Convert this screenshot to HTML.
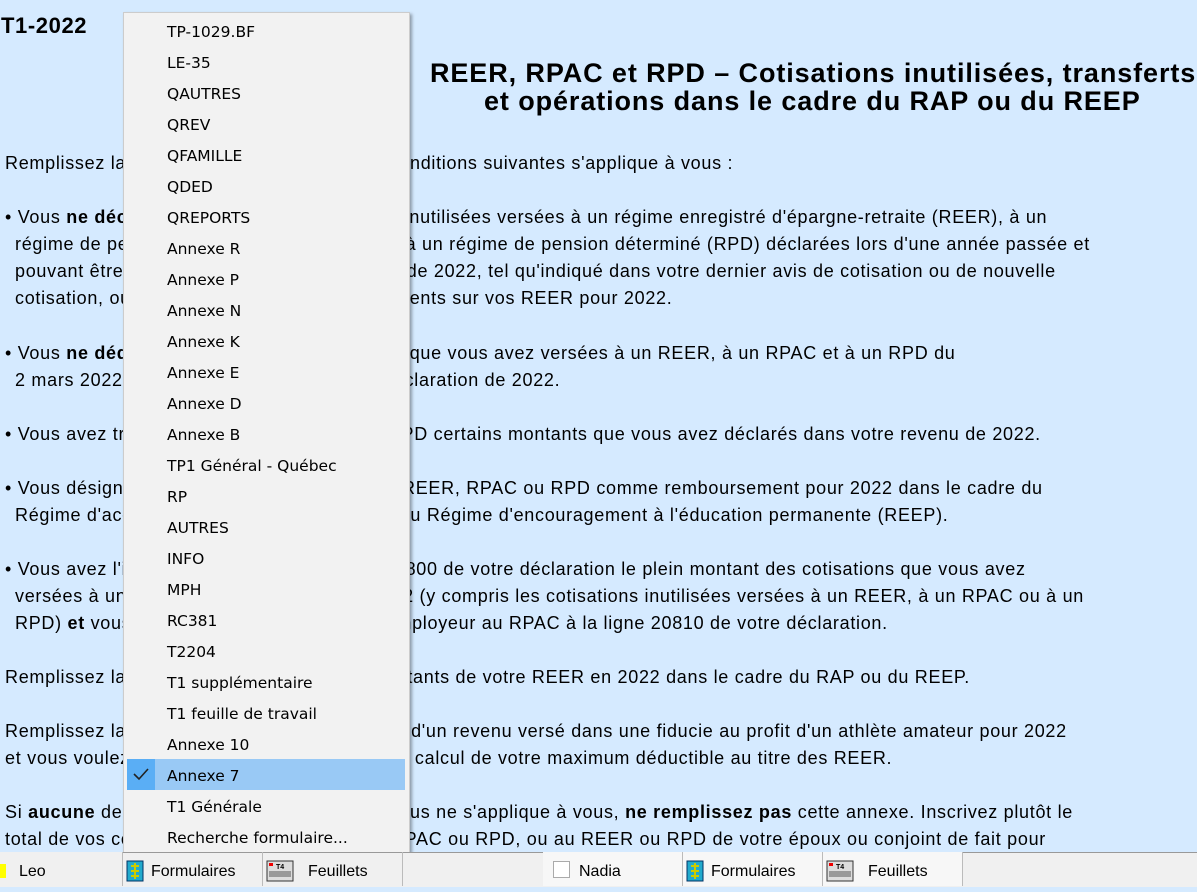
<!DOCTYPE html>
<html><head><meta charset="utf-8"><style>
body{margin:0;width:1197px;height:886px;overflow:hidden;background:#d5eaff;font-family:"Liberation Sans",Arial,sans-serif;position:relative;color:#000}
.l{position:absolute;white-space:nowrap;font-size:18px;letter-spacing:0.7px;line-height:20px}
.t{position:absolute;font-weight:bold;font-size:27px;letter-spacing:0.9px;white-space:nowrap}
#menu{position:absolute;left:123px;top:12px;width:285px;height:840px;background:#f2f2f2;border:1px solid #ccc;box-shadow:2px 2px 3px rgba(0,0,0,.35)}
#menu div{position:absolute;left:43px;font-family:"DejaVu Sans","Liberation Sans",sans-serif;font-size:15.5px;line-height:20px}
#hl{position:absolute;left:3px;top:746px;width:278px;height:31px;background:#99c9f5}
#hl2{position:absolute;left:3px;top:746px;width:28px;height:31px;background:#5aaef5}
#bar{position:absolute;left:0;top:852px;width:1197px;height:34px;background:#f0f0f0;border-top:1px solid #999}
.c{position:absolute;top:852px;height:34px;border-right:1px solid #bbb;font-size:16px;line-height:40px}
.ic{position:absolute;top:860px;width:18px;height:22px}
</style></head><body>
<div class="t" style="left:1px;top:13px;font-size:22px;letter-spacing:0.6px">T1-2022</div>
<div class="t" style="left:430px;top:58px">REER, RPAC et RPD – Cotisations inutilisées, transferts</div>
<div class="t" style="left:484px;top:86px">et opérations dans le cadre du RAP ou du REEP</div>
<div class="l" style="left:5px;top:153px">Remplissez la présente annexe si <b>l'une</b> des conditions suivantes s'applique à vous :</div>
<div class="l" style="left:5px;top:207px">• Vous <b>ne déclarez pas</b> toutes les cotisations inutilisées versées à un régime enregistré d'épargne-retraite (REER), à un</div>
<div class="l" style="left:15px;top:234px">régime de pension agréé collectif (RPAC) ou à un régime de pension déterminé (RPD) déclarées lors d'une année passée et</div>
<div class="l" style="left:15px;top:261px">pouvant être déduites dans votre déclaration de 2022, tel qu'indiqué dans votre dernier avis de cotisation ou de nouvelle</div>
<div class="l" style="left:15px;top:288px">cotisation, ou dans votre état des renseignements sur vos REER pour 2022.</div>
<div class="l" style="left:5px;top:343px">• Vous <b>ne déduisez pas</b> toutes les cotisations que vous avez versées à un REER, à un RPAC et à un RPD du</div>
<div class="l" style="left:15px;top:370px">2 mars 2022 au 1er mars 2023 dans votre déclaration de 2022.</div>
<div class="l" style="left:5px;top:424px">• Vous avez transféré à un REER, RPAC ou RPD certains montants que vous avez déclarés dans votre revenu de 2022.</div>
<div class="l" style="left:5px;top:478px">• Vous désignez des cotisations versées à un REER, RPAC ou RPD comme remboursement pour 2022 dans le cadre du</div>
<div class="l" style="left:15px;top:505px">Régime d'accession à la propriété (RAP) ou du Régime d'encouragement à l'éducation permanente (REEP).</div>
<div class="l" style="left:5px;top:559px">• Vous avez l'intention de déduire à la ligne 20800 de votre déclaration le plein montant des cotisations que vous avez</div>
<div class="l" style="left:15px;top:586px">versées à un REER, RPAC ou RPD pour 2022 (y compris les cotisations inutilisées versées à un REER, à un RPAC ou à un</div>
<div class="l" style="left:15px;top:613px">RPD) <b>et</b> vous déduisez les cotisations de l'employeur au RPAC à la ligne 20810 de votre déclaration.</div>
<div class="l" style="left:5px;top:667px">Remplissez la partie D si vous retirez des montants de votre REER en 2022 dans le cadre du RAP ou du REEP.</div>
<div class="l" style="left:5px;top:721px">Remplissez la partie E si vous avez une partie d'un revenu versé dans une fiducie au profit d'un athlète amateur pour 2022</div>
<div class="l" style="left:5px;top:748px">et vous voulez qu'il soit pris en compte dans le calcul de votre maximum déductible au titre des REER.</div>
<div class="l" style="left:5px;top:802px">Si <b>aucune</b> des conditions mentionnées ci-dessus ne s'applique à vous, <b>ne remplissez pas</b> cette annexe. Inscrivez plutôt le</div>
<div class="l" style="left:5px;top:829px">total de vos cotisations versées à un REER, RPAC ou RPD, ou au REER ou RPD de votre époux ou conjoint de fait pour</div>

<div id="menu">
<span id="hl"></span><span id="hl2"></span>
<svg style="position:absolute;left:9px;top:754px" width="16" height="14"><path d="M1 7 L6 12 L15 2" stroke="#222" stroke-width="1.6" fill="none"/></svg>
<div style="top:9px">TP-1029.BF</div>
<div style="top:40px">LE-35</div>
<div style="top:71px">QAUTRES</div>
<div style="top:102px">QREV</div>
<div style="top:133px">QFAMILLE</div>
<div style="top:164px">QDED</div>
<div style="top:195px">QREPORTS</div>
<div style="top:226px">Annexe R</div>
<div style="top:257px">Annexe P</div>
<div style="top:288px">Annexe N</div>
<div style="top:319px">Annexe K</div>
<div style="top:350px">Annexe E</div>
<div style="top:381px">Annexe D</div>
<div style="top:412px">Annexe B</div>
<div style="top:443px">TP1 Général - Québec</div>
<div style="top:474px">RP</div>
<div style="top:505px">AUTRES</div>
<div style="top:536px">INFO</div>
<div style="top:567px">MPH</div>
<div style="top:598px">RC381</div>
<div style="top:629px">T2204</div>
<div style="top:660px">T1 supplémentaire</div>
<div style="top:691px">T1 feuille de travail</div>
<div style="top:722px">Annexe 10</div>
<div style="top:753px">Annexe 7</div>
<div style="top:784px">T1 Générale</div>
<div style="top:815px">Recherche formulaire...</div>
</div>

<div id="bar"></div>
<div class="c" style="left:0;width:122px;background:#f0f0f0"><span style="position:absolute;left:0;top:12px;width:6px;height:14px;background:#ff0"></span><span style="position:absolute;left:19px">Leo</span></div>
<div class="c" style="left:123px;width:139px"><span style="position:absolute;left:28px">Formulaires</span></div>
<div class="c" style="left:263px;width:139px"><span style="position:absolute;left:45px">Feuillets</span></div>
<div class="c" style="left:543px;width:139px;background:#f7f7f7"><span style="position:absolute;left:10px;top:9px;width:15px;height:15px;border:1px solid #aaa;background:#fff"></span><span style="position:absolute;left:36px">Nadia</span></div>
<div class="c" style="left:683px;width:139px;background:#f7f7f7"><span style="position:absolute;left:28px">Formulaires</span></div>
<div class="c" style="left:823px;width:139px;background:#f7f7f7"><span style="position:absolute;left:45px">Feuillets</span></div>
<svg class="ic" style="left:126px"><rect x="1" y="1" width="16" height="20" fill="#2ac" stroke="#036"/><path d="M9 3 V19 M5 6 H13 M5 11 H13 M5 16 H13" stroke="#cc0" stroke-width="2"/></svg>
<svg class="ic" style="left:686px"><rect x="1" y="1" width="16" height="20" fill="#2ac" stroke="#036"/><path d="M9 3 V19 M5 6 H13 M5 11 H13 M5 16 H13" stroke="#cc0" stroke-width="2"/></svg>
<svg class="ic" style="left:266px;width:30px"><rect x="1" y="1" width="26" height="20" fill="#ddd" stroke="#333"/><rect x="3" y="3" width="4" height="3" fill="#e00"/><text x="10" y="9" font-size="7" font-family="Liberation Sans" font-weight="bold">T4</text><rect x="3" y="11" width="22" height="6" fill="#999"/></svg>
<svg class="ic" style="left:826px;width:30px"><rect x="1" y="1" width="26" height="20" fill="#ddd" stroke="#333"/><rect x="3" y="3" width="4" height="3" fill="#e00"/><text x="10" y="9" font-size="7" font-family="Liberation Sans" font-weight="bold">T4</text><rect x="3" y="11" width="22" height="6" fill="#999"/></svg>
</body></html>
